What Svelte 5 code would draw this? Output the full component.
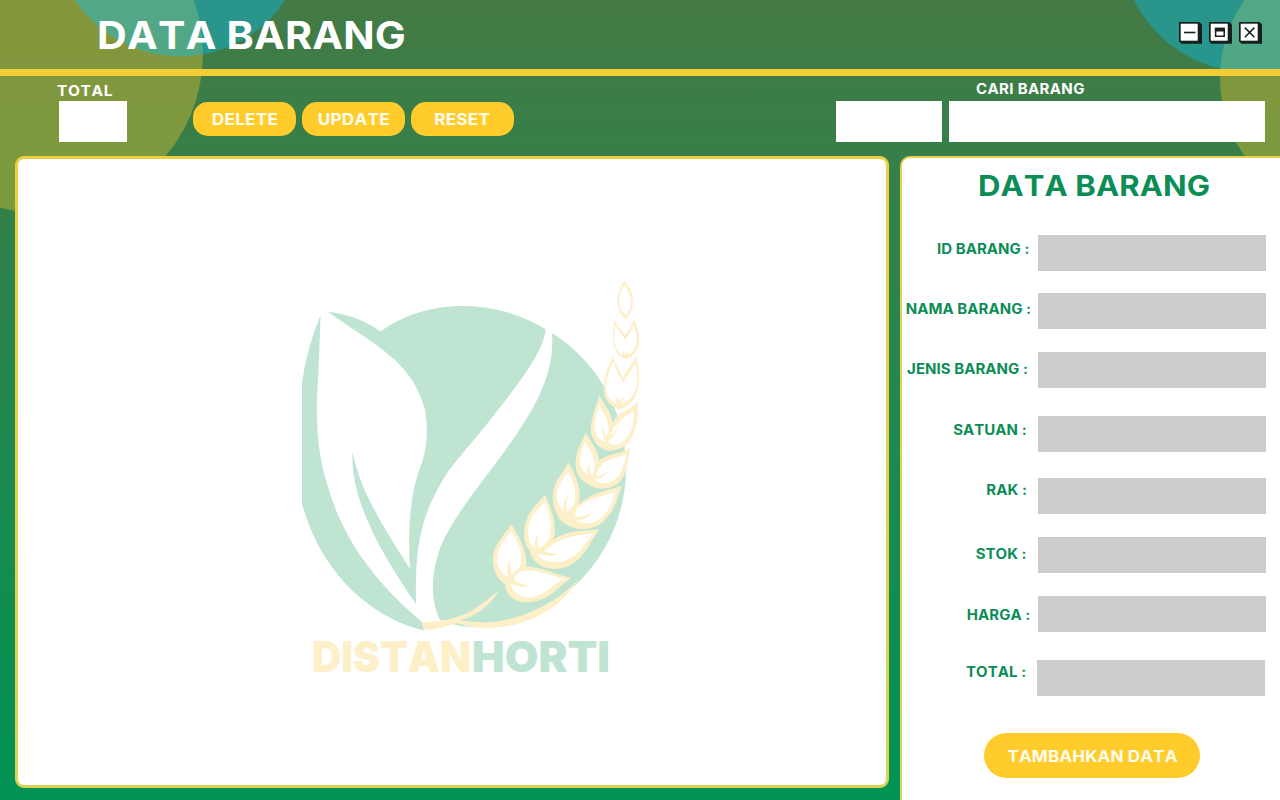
<script>
  const fields = [
    { label: 'ID BARANG :', top: 234.5, mid: 249, right: 1029 },
    { label: 'NAMA BARANG :', top: 293, mid: 309, right: 1031 },
    { label: 'JENIS BARANG :', top: 351.5, mid: 369, right: 1028 },
    { label: 'SATUAN :', top: 416, mid: 430, right: 1027 },
    { label: 'RAK :', top: 478, mid: 490, right: 1027 },
    { label: 'STOK :', top: 536.5, mid: 554, right: 1027 },
    { label: 'HARGA :', top: 596, mid: 615, right: 1030 },
    { label: 'TOTAL :', top: 660, mid: 672, right: 1026, shift: 1 }
  ];
  const rows = fields.map((f, i) => ({
    label: f.label,
    shift: f.shift ?? 0,
    before: i === 0 ? 0 : f.top - fields[i - 1].top - 36,
    pad: 1038 - f.right,
    lift: Math.round(f.mid - f.top) - 10.5
  }));
  const actions = ['DELETE', 'UPDATE', 'RESET'];
</script>

<div class="page">
  <svg class="backdrop" viewBox="0 0 1280 800" aria-hidden="true">
    <g fill="#ffcc2c" fill-opacity=".35">
      <circle cx="43" cy="53.4" r="160" />
      <circle cx="1357" cy="78" r="137" />
    </g>
    <g fill="#00c2ff" fill-opacity=".38">
      <circle cx="180" cy="-70" r="126.4" />
      <circle cx="1250" cy="-57.5" r="129.5" />
    </g>
  </svg>

  <header>
    <h1>DATA BARANG</h1>
    <svg class="windowbtns" width="86" height="26" viewBox="1178 20 86 26">
      {#each [1179, 1209, 1239] as x}
        <path d="M{x} 22h20.500l2.500 2.500v19.200h-20.500l-2.500-2.200z" fill="#16201f" />
        <rect x={x + 1.7} y="23.700" width="17" height="17" fill="#fff" />
      {/each}
      <path d="M1184 32.500h11.500" stroke="#16201f" stroke-width="1.600" />
      <path d="M1215.600 28.600h8.600v7.600h-8.600z" fill="none" stroke="#16201f" stroke-width="1.500" />
      <path d="M1214.900 27.800h10v3.700h-10z" fill="#16201f" />
      <path d="M1244.800 27.600l9.600 9.600M1254.400 27.600l-9.600 9.600" stroke="#16201f" stroke-width="1.500" />
    </svg>
  </header>

  <section class="toolbar">
    <div class="total">
      <label for="total">TOTAL</label>
      <div id="total" class="box"></div>
    </div>
    <div class="actions">
      {#each actions as a}<button><span>{a}</span></button>{/each}
    </div>
    <div class="search">
      <span>CARI BARANG</span>
      <div class="boxes"><div class="box"></div><div class="box"></div></div>
    </div>
  </section>

  <main>
    <section class="table">
      <svg class="logo" width="346" height="420" viewBox="298 276 346 420">
        <g fill="#bfe4d2">
          <path d="M302 382Q307 348 320.500 315Q319 365 317 398C316 435 320 462 328 487C342 535 370 578 422 622L424 630.500C378 620 323 580 302 504Z" />
          <path d="M381 331.500C420 301 490 295 545.500 329C545 352 510 395 490 420C468 448 450 466 440 485C420 520 415 550 416 604C382 555 350 500 352.500 452C360 490 382 525 410 569C408 535 409 497 420 468C428 448 428 428 425 410C413 362 375 345 328 312Q355 314 381 331.500Z" />
          <path d="M552 333C594 359 626 408 626 468C626 545 573 600 523 620C500 628 465 631 440 620C430 600 431 575 440 548C450 524 470 497 490 471C525 424 556 382 552 333Z" />
        </g>
        <path fill="#fdefc8" d="M421.500 622Q455 622 476 608Q488 600 499 590Q491 606 470 617L460 620Q490 626 520 616Q557 603 579 579Q560 610 521 623Q485 633 457 623Q440 629 424 630Z" />
        <g transform="translate(470 460) scale(.33333)">
          <g fill="#fdefc8">
            <path d="M125 193C150 235 175 280 168 320C210 318 260 345 303 353C270 375 240 425 170 427C130 428 105 400 105 372C80 360 65 320 70 285C75 250 105 220 125 193Z" />
            <path d="M225 104C245 145 263 195 250 240C295 207 345 215 389 207C355 250 335 326 250 327C215 326 183 303 178 270C158 250 158 205 173 170C185 145 208 125 225 104Z" />
            <path d="M295 7C320 50 338 95 325 133C365 98 410 92 456 77C440 115 425 205 340 207C300 207 265 185 260 158C243 130 245 90 262 60C275 40 288 23 295 7Z" />
            <path d="M347 -82C370 -45 385 -25 387 3C415 -20 450 -18 481 -36C470 10 475 85 395 86C355 84 322 55 318 25C314 -25 330 -40 347 -82Z" />
            <path d="M387 -193C405 -165 425 -140 428 -112C445 -145 475 -148 503 -173C505 -120 500 -30 420 -28C385 -30 360 -65 363 -100C367 -145 380 -160 387 -193Z" />
            <path d="M428 -314C435 -285 450 -265 460 -247C470 -275 488 -285 497 -314C510 -275 525 -170 447 -152C395 -170 398 -215 405 -245C408 -270 420 -290 428 -314Z" />
            <path d="M434 -420C444 -400 455 -390 466 -374C475 -390 485 -400 491 -424C517 -375 515 -315 467 -303C422 -320 425 -370 434 -420Z" />
            <path d="M463 -538C497 -500 497 -450 466 -422C434 -450 437 -500 463 -538Z" />
          </g>
          <g fill="#fff">
            <path d="M125 214C147 250 160 285 153 311C148 325 135 333 126 345C122 335 118 318 121 291C113 312 108 332 114 350C88 340 79 310 83 285C88 255 108 235 125 214ZM148 336C198 320 240 350 284 356C250 368 230 408 175 413C148 412 128 395 121 370C140 380 160 385 182 378C162 374 142 370 133 358C137 347 140 340 148 336Z" />
            <path d="M225 127C240 160 249 200 237 238C226 250 217 260 207 265C201 252 202 240 207 220C195 235 192 250 195 266C173 250 168 205 184 175C195 152 212 140 225 127ZM240 261C280 228 325 228 370 219C340 258 320 300 260 307C225 308 210 296 202 280C225 288 245 292 268 283C245 280 228 278 222 271Z" />
            <path d="M294 31C311 65 322 100 312 133C306 145 299 152 291 154C287 140 289 125 295 104C284 120 280 135 280 151C255 130 256 95 271 69C280 53 289 43 294 31ZM325 141C365 111 400 108 438 95C425 130 410 182 355 190C340 192 325 186 320 181C340 179 355 173 365 158C347 168 330 172 314 169C316 158 319 148 325 141Z" />
            <path d="M346 -55C365 -20 375 -5 374 21C374 32 371 40 366 45C361 35 357 25 358 7C352 20 351 35 354 47C335 35 329 15 330 -5C331 -25 339 -39 346 -55ZM392 17C410 -5 440 -5 468 -18C460 20 454 62 405 70C390 72 378 65 372 58C390 57 405 49 411 35C400 44 388 48 379 48C381 35 386 25 392 17Z" />
            <path d="M387 -168C403 -135 417 -115 416 -92C415 -82 413 -75 409 -69C404 -79 400 -92 398 -108C396 -90 398 -73 403 -63L405 -54C380 -62 370 -90 375 -112C377 -135 383 -147 387 -168ZM430 -94C450 -125 470 -130 491 -149C493 -110 485 -55 438 -46C428 -45 420 -49 414 -54L421 -62C433 -73 441 -87 445 -106C438 -89 430 -79 422 -73Z" />
            <path d="M430 -296C438 -268 450 -250 460 -232C470 -254 487 -270 495 -292C508 -250 508 -190 456 -169L463 -194L449 -176L433 -192L441 -168C403 -185 406 -222 411 -242C415 -262 424 -277 430 -296Z" />
            <path d="M437 -406C447 -386 456 -376 466 -360C475 -376 485 -388 490 -406C507 -367 503 -330 472 -315L475 -331L465 -317L455 -331L459 -314C428 -331 429 -370 437 -406Z" />
            <path d="M463 -525C489 -492 489 -459 467 -434C441 -458 441 -492 463 -525Z" />
          </g>
        </g>
        <g font-family="Inter, sans-serif" font-weight="900" font-size="43">
          <text x="312" y="672" fill="#fdefc8" textLength="159" lengthAdjust="spacingAndGlyphs">DISTAN</text>
          <text x="472" y="672" fill="#bfe4d2" textLength="138" lengthAdjust="spacingAndGlyphs">HORTI</text>
        </g>
      </svg>
    </section>

    <section class="form">
      <h2>DATA BARANG</h2>
      <div class="fields">
        {#each rows as r}
          <div class="field" style="margin-top:{r.before}px;margin-right:{r.shift}px">
            <span style="margin-right:{r.pad - r.shift}px;margin-top:{r.lift}px">{r.label}</span>
            <div class="input"></div>
          </div>
        {/each}
      </div>
      <button class="submit"><span>TAMBAHKAN DATA</span></button>
    </section>
  </main>
</div>

<style>
  :global(body) { margin: 0; overflow: hidden; }
  .page {
    position: relative;
    width: 1280px;
    height: 800px;
    overflow: hidden;
    display: flex;
    flex-direction: column;
    background: linear-gradient(#447a45 0%, #367f49 20%, #1d8950 58%, #009353 100%);
    font-family: Inter, sans-serif;
    font-weight: 700;
    font-kerning: none;
    color: #fff;
  }
  .page * { box-sizing: border-box; }
  .backdrop { position: absolute; inset: 0; }
  h1, h2, .total label, .search > span { transform: scaleX(1.07); transform-origin: 0 50%; }
  header {
    position: relative;
    height: 76px;
    flex: none;
    display: flex;
    justify-content: space-between;
    padding: 0 16px 0 97px;
    border-bottom: 7px solid #f5cd36;
  }
  h1 { margin: 11px 0 0; font-size: 38.5px; line-height: 48px; letter-spacing: .2px; white-space: nowrap; }
  .windowbtns { margin-top: 20px; }
  .toolbar { position: relative; height: 80px; flex: none; display: flex; padding: 0 15px 0 57px; }
  .box { background: #fff; height: 41px; }
  .total { width: 136px; padding-top: 5px; }
  .total label { display: block; font-size: 14.5px; line-height: 20px; letter-spacing: .6px; }
  .total .box { width: 68px; margin-left: 2px; }
  .actions { display: flex; gap: 6px; padding-top: 26px; }
  button {
    border: 0;
    padding: 0;
    background: #ffcc2c;
    color: #fffdf0;
    font: 700 16px Inter, sans-serif;
    font-kerning: none;
    white-space: nowrap;
  }
  button span { display: inline-block; transform: scaleX(1.07); }
  .actions button { width: 103px; height: 34px; border-radius: 15px; letter-spacing: .25px; }
  .search { margin-left: auto; width: 429px; padding-top: 3px; }
  .search > span { display: block; width: 120px; margin-left: 140px; font-size: 14px; line-height: 20px; letter-spacing: .35px; white-space: nowrap; }
  .boxes { display: flex; gap: 7px; margin-top: 2px; }
  .boxes .box:first-child { width: 106px; }
  .boxes .box:last-child { width: 316px; }
  main { position: relative; flex: 1; display: flex; padding-left: 15px; gap: 11px; }
  .table {
    width: 874px;
    height: 631.5px;
    background: linear-gradient(#fff, #fff) padding-box, linear-gradient(#efce41, #d9d355) border-box;
    border: 3px solid transparent;
    border-radius: 9px;
    padding: 117px 0 0 280px;
  }
  .logo { display: block; }
  .form {
    width: 380px;
    height: 660px;
    background: linear-gradient(#fff, #fff) padding-box, linear-gradient(#e8cf50, #d3d765) border-box;
    border: 2px solid transparent;
    border-width: 2px 0 0 2px;
    border-radius: 10px 0 0 0;
    color: #0b8d56;
    display: flex;
    flex-direction: column;
  }
  h2 { margin: 10px 0 0 76px; font-size: 29px; line-height: 36px; letter-spacing: .1px; white-space: nowrap; width: 240px; }
  .fields { margin: 30.5px 14px 0 0; }
  .field { display: flex; justify-content: flex-end; height: 36px; }
  .field span { font-size: 14px; line-height: 20px; letter-spacing: .05px; white-space: nowrap; transform: scaleX(1.07); transform-origin: 100% 50%; }
  .input { width: 228px; height: 36px; background: #ccc; flex: none; }
  .submit { width: 216px; height: 45px; border-radius: 22.5px; margin: 37px 0 0 82px; letter-spacing: .1px; }
</style>
